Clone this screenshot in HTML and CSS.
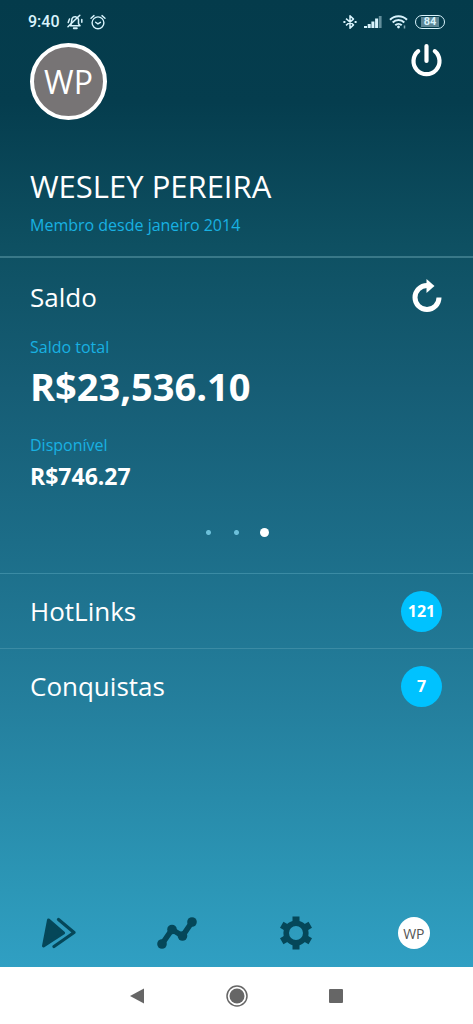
FILE: index.html
```html
<!DOCTYPE html>
<html lang="pt-BR">
<head>
<meta charset="utf-8">
<meta name="viewport" content="width=device-width, initial-scale=1">
<title>Perfil</title>
<link rel="stylesheet" href="styles.css">
</head>
<body>
<div class="app">
  <div class="status">
    <div class="status-group">
      <span class="clock">9:40</span>
      <svg width="16" height="16" viewBox="0 0 16 16" fill="none" stroke="currentColor" stroke-width="1.5" stroke-linecap="round" stroke-linejoin="round"><path d="M3.500 11.800h9.500l-1.500-2V5.400a3.500 3.500 0 0 0-6.500-.8L4.200 9.800z"/><path d="M1 12.800 12.800 1.200M1.200 8.500 2.500 5M14.800 8.200V5.400"/><path d="M6.800 14.200h3" stroke-width="2"/></svg>
      <svg width="16" height="16" viewBox="0 0 16 16" fill="none" stroke="currentColor" stroke-width="1.4" stroke-linecap="round"><circle cx="8" cy="8.800" r="5.900"/><path d="m5.600 8.200 2.300 1.600 2.600-1.500M1 4.200 4 1.600M15 4.200 12 1.600"/></svg>
    </div>
    <div class="status-group">
      <svg width="14" height="16" viewBox="0 0 14 16" fill="none" stroke="currentColor" stroke-width="1.500" stroke-linejoin="round"><path d="m3 4.600 7.500 6.300L7 14.200V1.800l3.500 3.300L3 11.400"/><path d="M.4 7h2v2h-2zM11.600 7h2v2h-2z" fill="currentColor" stroke="none"/></svg>
      <svg width="18" height="14" viewBox="0 0 18 14" fill="currentColor"><path d="M0 11h3v2H0zM3.700 9h3v4h-3zM7.400 6.500h3V13h-3zM11.100 3.500h3V13h-3z"/><path d="M14.800 1h2.800v12h-2.800z" opacity=".45"/></svg>
      <svg width="19" height="16" viewBox="0 0 19 16" fill="none" stroke="currentColor" stroke-width="2"><path d="M1 5.700a12 12 0 0 1 17 0M3.700 8.500a8.200 8.200 0 0 1 11.600 0M6.300 11.200a4.600 4.600 0 0 1 6.400 0"/><circle cx="9.500" cy="13" r="1.400" fill="currentColor" stroke="none"/><path d="M15.500 11.500v3" stroke-width="1.500" opacity=".6"/></svg>
      <span class="battery"><span class="battery-level">84</span></span>
    </div>
  </div>

  <main class="content">
    <section class="profile">
      <div class="profile-top">
        <div class="avatar">WP</div>
        <button class="icon-button" type="button" aria-label="Sair">
          <svg width="31" height="34" viewBox="0 0 31 34" fill="none" stroke="currentColor" stroke-width="4.200" stroke-linecap="round"><path d="M7.200 8.200a13 13 0 1 0 16.600 0"/><path d="M15.500 3v15"/></svg>
        </button>
      </div>
      <h1 class="name">WESLEY PEREIRA</h1>
      <p class="label">Membro desde janeiro 2014</p>
    </section>

    <section class="balance">
      <div class="balance-head">
        <h2 class="heading">Saldo</h2>
        <button class="icon-button" type="button" aria-label="Atualizar">
          <svg width="30" height="36" viewBox="0 0 30 36" fill="none"><path d="M27 18.500a12 12 0 1 1-12-12" stroke="currentColor" stroke-width="5"/><path d="M14.500 0 22.500 7 14.500 14z" fill="currentColor"/></svg>
        </button>
      </div>
      <p class="label">Saldo total</p>
      <p class="total">R$23,536.10</p>
      <p class="label">Disponível</p>
      <p class="available">R$746.27</p>
      <div class="pager">
        <button class="dot" type="button" aria-label="Página 1"></button>
        <button class="dot" type="button" aria-label="Página 2"></button>
        <button class="dot dot-active" type="button" aria-label="Página 3"></button>
      </div>
    </section>

    <a class="row" href="#hotlinks"><span class="heading">HotLinks</span><span class="badge">121</span></a>
    <a class="row" href="#conquistas"><span class="heading">Conquistas</span><span class="badge">7</span></a>
  </main>

  <nav class="tabs">
    <a class="tab" href="#inicio" aria-label="Início"><svg width="34" height="32" viewBox="0 0 34 32" fill="currentColor" stroke="currentColor" stroke-linejoin="round" stroke-linecap="round"><path d="M6.500 3 21.500 16 1.500 29z" stroke-width="3"/><path d="M16.500 2.500 32 15.500 12 29.500" fill="none" stroke-width="3.200"/></svg></a>
    <a class="tab" href="#vendas" aria-label="Vendas"><svg width="40" height="34" viewBox="0 0 40 34" fill="currentColor"><path d="M5 28 15 13.500 25.500 20 35 6" fill="none" stroke="currentColor" stroke-width="5.500"/><circle cx="5" cy="28" r="4.800"/><circle cx="15" cy="13.500" r="4.800"/><circle cx="25.500" cy="20" r="4.800"/><circle cx="35" cy="6" r="4.800"/></svg></a>
    <a class="tab" href="#ajustes" aria-label="Ajustes"><svg width="32" height="34" viewBox="-16 -17 32 34" fill="none" stroke="currentColor"><path d="M0-16.500v5M0 16.500v-5M-14.300-8.200l4.300 2.500M14.300 8.200 10 5.700M-14.300 8.200-10 5.700M14.300-8.200 10-5.700" stroke-width="7"/><circle r="9.800" stroke-width="5.600"/></svg></a>
    <a class="tab" href="#perfil" aria-label="Perfil"><span class="tab-avatar">WP</span></a>
  </nav>

  <div class="system-bar">
    <button class="system-button" type="button" aria-label="Voltar"><svg width="16" height="18" viewBox="0 0 16 18"><path d="M0 9 14 1.500v15z" fill="currentColor"/></svg></button>
    <button class="system-button" type="button" aria-label="Tela inicial"><svg width="22" height="22" viewBox="0 0 22 22"><circle cx="11" cy="11" r="7.500" fill="currentColor"/><circle cx="11" cy="11" r="10" fill="none" stroke="currentColor" stroke-width="1.500"/></svg></button>
    <button class="system-button" type="button" aria-label="Recentes"><svg width="16" height="16" viewBox="0 0 16 16"><rect x="1" y="1" width="14" height="14" rx="1" fill="currentColor"/></svg></button>
  </div>
</div>
</body>
</html>
```

FILE: styles.css
```css
* {
  box-sizing: border-box;
}

body,
h1,
h2,
p {
  margin: 0;
}

body {
  font-family: "Open Sans", "Noto Sans", sans-serif;
  color: #fff;
}

button {
  padding: 0;
  border: 0;
  background: none;
  color: inherit;
  font: inherit;
}

a {
  color: inherit;
  text-decoration: none;
}

svg {
  display: block;
}

.app {
  display: flex;
  flex-direction: column;
  min-height: 100vh;
  background: linear-gradient(#043b4b 0%, #053d4e 10%, #0e5062 24%, #165d75 38%, #1c6d88 53%, #247f9d 69%, #2c97b7 87%, #30a0c4 95%);
}

.status {
  display: flex;
  justify-content: space-between;
  align-items: center;
  height: 43px;
  padding: 0 28px;
  color: #d8f3fc;
}

.status-group {
  display: flex;
  align-items: center;
  gap: 7px;
}

.clock {
  font: 500 16px/20px Roboto, sans-serif;
}

.battery {
  display: flex;
  width: 30px;
  height: 14px;
  padding: 1px 5px;
  border: 1px solid currentColor;
  border-radius: 7px;
}

.battery-level {
  flex: 1;
  background: #5d8594;
  font: 700 11px/10px Roboto, sans-serif;
  text-align: center;
}

.content {
  flex: 1;
}

.profile {
  padding: 0 31px 19px 30px;
  border-bottom: 2px solid #397888;
}

.profile-top {
  display: flex;
  justify-content: space-between;
  align-items: flex-start;
}

.avatar {
  display: grid;
  place-items: center;
  width: 77px;
  height: 77px;
  border: 4px solid #fff;
  border-radius: 50%;
  background: #777475;
  font-size: 32px;
}

.name {
  margin: 44px 0 5px;
  font-size: 31px;
  line-height: 44px;
  font-weight: 400;
}

.label {
  font-size: 16px;
  line-height: 24px;
  color: #18b1e2;
}

.balance {
  padding: 20px 31px 36px 30px;
}

.balance-head {
  display: flex;
  justify-content: space-between;
  align-items: center;
  margin-bottom: 19px;
}

.heading {
  font-size: 26px;
  line-height: 38px;
  font-weight: 400;
}

.total {
  margin-bottom: 20px;
  font-size: 38px;
  line-height: 54px;
  font-weight: 700;
}

.available {
  font-size: 23px;
  line-height: 38px;
  font-weight: 700;
}

.pager {
  display: flex;
  justify-content: center;
  align-items: center;
  gap: 19px;
  margin-top: 33px;
}

.dot {
  width: 9px;
  height: 9px;
  border-radius: 50%;
  background: radial-gradient(circle, #6cc0da 2px, transparent 3px);
}

.dot-active {
  background: #fff;
}

.row {
  display: flex;
  justify-content: space-between;
  align-items: center;
  height: 75px;
  padding: 0 31px 0 30px;
  border-top: 1px solid #3b8ba4;
}

.badge {
  display: grid;
  place-items: center;
  width: 41px;
  height: 41px;
  border-radius: 50%;
  background: #00c2ff;
  font-size: 16px;
  font-weight: 700;
}

.tabs {
  display: flex;
  height: 68px;
  color: #054759;
}

.tab {
  display: grid;
  flex: 1;
  place-items: center;
}

.tab-avatar {
  display: grid;
  place-items: center;
  width: 32px;
  height: 32px;
  border-radius: 50%;
  background: #fff;
  color: #555;
  font-size: 14px;
}

.system-bar {
  display: flex;
  justify-content: center;
  align-items: center;
  gap: 60px;
  height: 57px;
  background: #fff;
  color: #666;
}

.system-button {
  display: grid;
  place-items: center;
  width: 39px;
  height: 48px;
}
```
